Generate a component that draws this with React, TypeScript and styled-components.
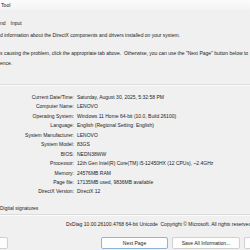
import React from 'react'
import styled, { createGlobalStyle } from 'styled-components'

const GlobalStyle = createGlobalStyle`
  html, body {
    margin: 0;
    padding: 0;
    background: #f0f0f0;
  }
  body {
    font-family: "Liberation Sans", Arial, sans-serif;
    font-size: 5px;
    color: #1c1c1c;
  }
`

const Window = styled.div`
  width: 250px;
  height: 250px;
  overflow: hidden;
  display: flex;
  flex-direction: column;
  background: #f0f0f0;
`

const TitleBar = styled.div`
  height: 10px;
  line-height: 10px;
  padding-left: 1px;
  font-size: 5.2px;
  white-space: nowrap;
  background: linear-gradient(to bottom, #fbfbfb, #f4f4f4);
`

const TabStrip = styled.div`
  margin-top: 8px;
  height: 10px;
  display: flex;
  align-items: center;
  gap: 5px;
  white-space: nowrap;
`

const Tab = styled.span`
  line-height: 10px;
`

const Para = styled.p<{ $gap: number }>`
  margin: ${(p) => p.$gap}px 0 0;
  line-height: 10px;
  white-space: nowrap;
`

const Divider = styled.div<{ $gap: number }>`
  margin-top: ${(p) => p.$gap}px;
  height: 1px;
  background: #dcdcdc;
  border-bottom: 1px solid #fafafa;
`

const InfoGrid = styled.div`
  margin-top: 6.3px;
  display: grid;
  grid-template-columns: 74px 1fr;
  column-gap: 3px;
  grid-auto-rows: 9.45px;
  align-items: center;
  white-space: nowrap;
`

const Label = styled.span`
  text-align: right;
`

const Value = styled.span``

const CheckLine = styled.div`
  margin-top: 6.7px;
  height: 10px;
  line-height: 10px;
  white-space: nowrap;
`

const Footer = styled.div`
  margin-top: 3px;
  height: 10px;
  line-height: 10px;
  padding-left: 66px;
  white-space: nowrap;
`

const ButtonRow = styled.div`
  margin-top: 8px;
  display: flex;
  gap: 4px;
`

const Button = styled.button<{ $w: number; $primary?: boolean }>`
  flex: none;
  width: ${(p) => p.$w}px;
  height: 12px;
  padding: 0;
  font: inherit;
  color: #1c1c1c;
  background: #fdfdfd;
  border: 1px solid ${(p) => (p.$primary ? '#8fb4d9' : '#d0d0d0')};
  border-radius: 2px;
  white-space: nowrap;
  overflow: hidden;
`

const info: [string, string][] = [
  ['Current Date/Time:', 'Saturday, August 30, 2025, 5:32:58 PM'],
  ['Computer Name:', 'LENOVO'],
  ['Operating System:', 'Windows 11 Home 64-bit (10.0, Build 26100)'],
  ['Language:', 'English (Regional Setting: English)'],
  ['System Manufacturer:', 'LENOVO'],
  ['System Model:', '83GS'],
  ['BIOS:', 'NEDN38WW'],
  ['Processor:', '12th Gen Intel(R) Core(TM) i5-12450HX (12 CPUs), ~2.4GHz'],
  ['Memory:', '24576MB RAM'],
  ['Page file:', '17135MB used, 9836MB available'],
  ['DirectX Version:', 'DirectX 12'],
]

export default function App() {
  return (
    <Window>
      <GlobalStyle />
      <TitleBar>Tool</TitleBar>
      <TabStrip>
        <Tab>nd</Tab>
        <Tab>Input</Tab>
      </TabStrip>
      <Para $gap={2}>
        d information about the DirectX components and drivers installed on
        your system.
      </Para>
      <Para $gap={8}>
        s causing the problem, click the appropriate tab above.&nbsp; Otherwise,
        you can use the "Next Page" button below to
        <br />
        ence.
      </Para>
      <Divider $gap={16} />
      <InfoGrid>
        {info.map(([label, value]) => (
          <React.Fragment key={label}>
            <Label>{label}</Label>
            <Value>{value}</Value>
          </React.Fragment>
        ))}
      </InfoGrid>
      <CheckLine>Digital signatures</CheckLine>
      <Divider $gap={1} />
      <Footer>
        DxDiag 10.00.26100.4768 64-bit Unicode&nbsp; Copyright © Microsoft. All
        rights reserved.
      </Footer>
      <ButtonRow>
        <Button $w={61} style={{ marginLeft: -53 }}>
          Help
        </Button>
        <Button $w={67} $primary style={{ marginLeft: 89 }}>
          Next Page
        </Button>
        <Button $w={68}>Save All Information...</Button>
        <Button $w={60}>Exit</Button>
      </ButtonRow>
    </Window>
  )
}
